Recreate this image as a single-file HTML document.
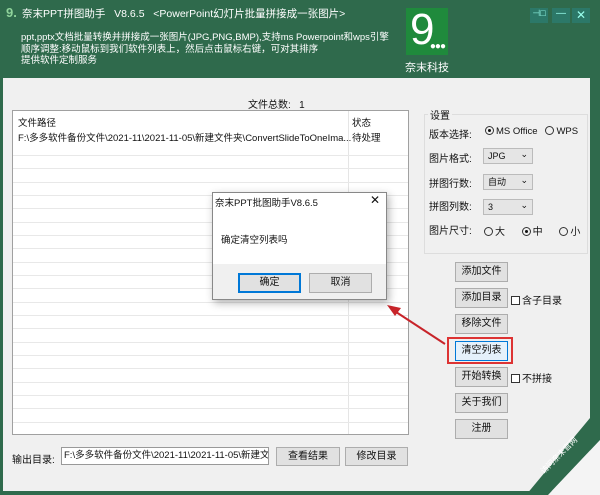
<!DOCTYPE html><html><head><meta charset="utf-8"><style>
*{margin:0;padding:0;box-sizing:border-box}
body{width:600px;height:495px;overflow:hidden;background:#2f6a4c;font-family:"Liberation Sans","Noto Sans CJK SC",sans-serif;font-size:10px;color:#111;position:relative}
.a{position:absolute}
.w{color:#fff}
.btn{position:absolute;background:#e1e1e1;border:1px solid #adadad;text-align:center;font-size:10px;line-height:18px}
.row{position:absolute;left:13px;width:395px;height:1px;background:#e8e8e8}
.rad{display:inline-block;width:9px;height:9px;border:1px solid #333;border-radius:50%;vertical-align:-1px;margin-right:2px;position:relative}
.rad.on::after{content:"";position:absolute;left:2px;top:2px;width:3px;height:3px;border-radius:50%;background:#111}
.sel{position:absolute;left:483px;width:50px;height:16px;background:#e5e5e5;border:1px solid #bbb;font-size:9px;line-height:14px;padding-left:4px}
.sel::after{content:"⌄";position:absolute;right:4px;top:-2px;font-size:9px}
.cb{display:inline-block;width:9px;height:9px;border:1px solid #333;background:#fff;vertical-align:-1px;margin-right:2px}
</style></head><body>
<div class="a w" style="left:6px;top:5px;font-size:13px;font-weight:bold;color:#8fd39b">9.</div>
<div class="a w" style="left:22px;top:6px;font-size:10.5px">奈末PPT拼图助手 &nbsp; V8.6.5 &nbsp; &lt;PowerPoint幻灯片批量拼接成一张图片&gt;</div>
<div class="a w" style="left:21px;top:32px;font-size:9.5px;line-height:11.5px">ppt,pptx文档批量转换并拼接成一张图片(JPG,PNG,BMP),支持ms Powerpoint和wps引擎<br>顺序调整:移动鼠标到我们软件列表上，然后点击鼠标右键，可对其排序<br>提供软件定制服务</div>
<div class="a" style="left:406px;top:8px;width:42px;height:47px;background:#1f8a3c"><div class="w" style="font-size:44px;line-height:44px;padding-left:4px;font-family:'Liberation Sans',sans-serif">9</div><div class="a w" style="right:3px;bottom:3px;font-size:10px;font-weight:bold;letter-spacing:-1px">●●●</div></div>
<div class="a w" style="left:405px;top:59px;font-size:11px">奈末科技</div>
<div class="a" style="left:530px;top:8px;width:18px;height:15px;background:#2c7868;color:#9fe;font-size:9px;text-align:center">⊣□</div>
<div class="a" style="left:552px;top:8px;width:18px;height:15px;background:#2c7868;color:#9fe;text-align:center;font-size:10px">—</div>
<div class="a" style="left:572px;top:8px;width:18px;height:15px;background:#2c7868;color:#9fe;text-align:center;font-size:12px;line-height:14px">✕</div>
<div class="a" style="left:3px;top:78px;width:587px;height:413px;background:#f0f0f0"></div>
<div class="a" style="left:248px;top:96px">文件总数: &nbsp; 1</div>
<div class="a" style="left:12px;top:110px;width:397px;height:325px;background:#fff;border:1px solid #a0a0a0"></div>
<div class="a" style="left:348px;top:111px;width:1px;height:323px;background:#e5e5e5"></div>
<div class="a" style="left:18px;top:115px;font-size:9.5px">文件路径</div>
<div class="a" style="left:352px;top:115px;font-size:9.5px">状态</div>
<div class="a" style="left:18px;top:130px;font-size:9.5px">F:\多多软件备份文件\2021-11\2021-11-05\新建文件夹\ConvertSlideToOneIma...</div>
<div class="a" style="left:352px;top:130px;font-size:9.5px">待处理</div>
<div class="row" style="top:155px"></div><div class="row" style="top:168px"></div><div class="row" style="top:182px"></div><div class="row" style="top:195px"></div><div class="row" style="top:208px"></div><div class="row" style="top:222px"></div><div class="row" style="top:235px"></div><div class="row" style="top:248px"></div><div class="row" style="top:262px"></div><div class="row" style="top:275px"></div><div class="row" style="top:288px"></div><div class="row" style="top:302px"></div><div class="row" style="top:315px"></div><div class="row" style="top:328px"></div><div class="row" style="top:342px"></div><div class="row" style="top:355px"></div><div class="row" style="top:368px"></div><div class="row" style="top:382px"></div><div class="row" style="top:395px"></div><div class="row" style="top:408px"></div><div class="row" style="top:422px"></div>
<div class="a" style="left:12px;top:451px">输出目录:</div>
<div class="a" style="left:61px;top:447px;width:208px;height:18px;background:#fff;border:1px solid #999;font-size:9.5px;line-height:16px;padding-left:2px;white-space:nowrap;overflow:hidden">F:\多多软件备份文件\2021-11\2021-11-05\新建文</div>
<div class="btn" style="left:276px;top:447px;width:64px;height:19px">查看结果</div>
<div class="btn" style="left:345px;top:447px;width:63px;height:19px">修改目录</div>
<div class="a" style="left:424px;top:114px;width:164px;height:140px;border:1px solid #ddd"></div>
<div class="a" style="left:428px;top:107px;background:#f0f0f0;padding:0 2px">设置</div>
<div class="a" style="left:429px;top:126px">版本选择:</div>
<div class="a" style="left:485px;top:126px;font-size:9.5px"><span class="rad on"></span>MS Office &nbsp;&nbsp;<span class="rad"></span>WPS</div>
<div class="a" style="left:429px;top:150px">图片格式:</div><div class="sel" style="top:148px">JPG</div>
<div class="a" style="left:429px;top:175px">拼图行数:</div><div class="sel" style="top:174px">自动</div>
<div class="a" style="left:429px;top:198px">拼图列数:</div><div class="sel" style="top:199px">3</div>
<div class="a" style="left:429px;top:222px">图片尺寸:</div>
<div class="a" style="left:484px;top:223px"><span class="rad"></span>大 &nbsp;&nbsp;&nbsp;&nbsp;&nbsp;<span class="rad on"></span>中 &nbsp;&nbsp;&nbsp;&nbsp;&nbsp;<span class="rad"></span>小</div>
<div class="btn" style="left:455px;top:262px;width:53px;height:20px">添加文件</div>
<div class="btn" style="left:455px;top:288px;width:53px;height:20px">添加目录</div>
<div class="a" style="left:511px;top:292px"><span class="cb"></span>含子目录</div>
<div class="btn" style="left:455px;top:314px;width:53px;height:20px">移除文件</div>
<div class="a" style="left:447px;top:337px;width:66px;height:27px;border:2px solid #d33"></div>
<div class="btn" style="left:455px;top:341px;width:53px;height:20px;background:#e5f1fb;border-color:#0078d7">清空列表</div>
<div class="btn" style="left:455px;top:367px;width:53px;height:20px">开始转换</div>
<div class="a" style="left:511px;top:370px"><span class="cb"></span>不拼接</div>
<div class="btn" style="left:455px;top:393px;width:53px;height:20px">关于我们</div>
<div class="btn" style="left:455px;top:419px;width:53px;height:20px">注册</div>
<svg class="a" style="left:0;top:0" width="600" height="495"><line x1="445" y1="344" x2="393" y2="310" stroke="#c8242a" stroke-width="2"/><polygon points="387,305 401,308 395,316" fill="#c8242a"/><polygon points="590,418 600,418 600,440 548,495 526,495" fill="#2f6a4c"/><polygon points="600,440 600,495 548,495" fill="#f4f4f4"/></svg>
<div class="a" style="left:535px;top:450px;color:#fff;font-size:8px;transform:rotate(-45deg)">访问奈末官网</div>
<div class="a" style="left:212px;top:192px;width:175px;height:108px;background:#fff;border:1px solid #888;box-shadow:2px 3px 8px rgba(0,0,0,.3)"></div>
<div class="a" style="left:215px;top:195px;font-size:9.5px">奈末PPT批图助手V8.6.5</div>
<div class="a" style="left:370px;top:193px;font-size:12px">✕</div>
<div class="a" style="left:221px;top:232px;font-size:9.5px">确定清空列表吗</div>
<div class="a" style="left:213px;top:264px;width:173px;height:35px;background:#f0f0f0"></div>
<div class="btn" style="left:238px;top:273px;width:63px;height:20px;border:2px solid #0078d7;line-height:16px">确定</div>
<div class="btn" style="left:309px;top:273px;width:63px;height:20px">取消</div>
</body></html>
